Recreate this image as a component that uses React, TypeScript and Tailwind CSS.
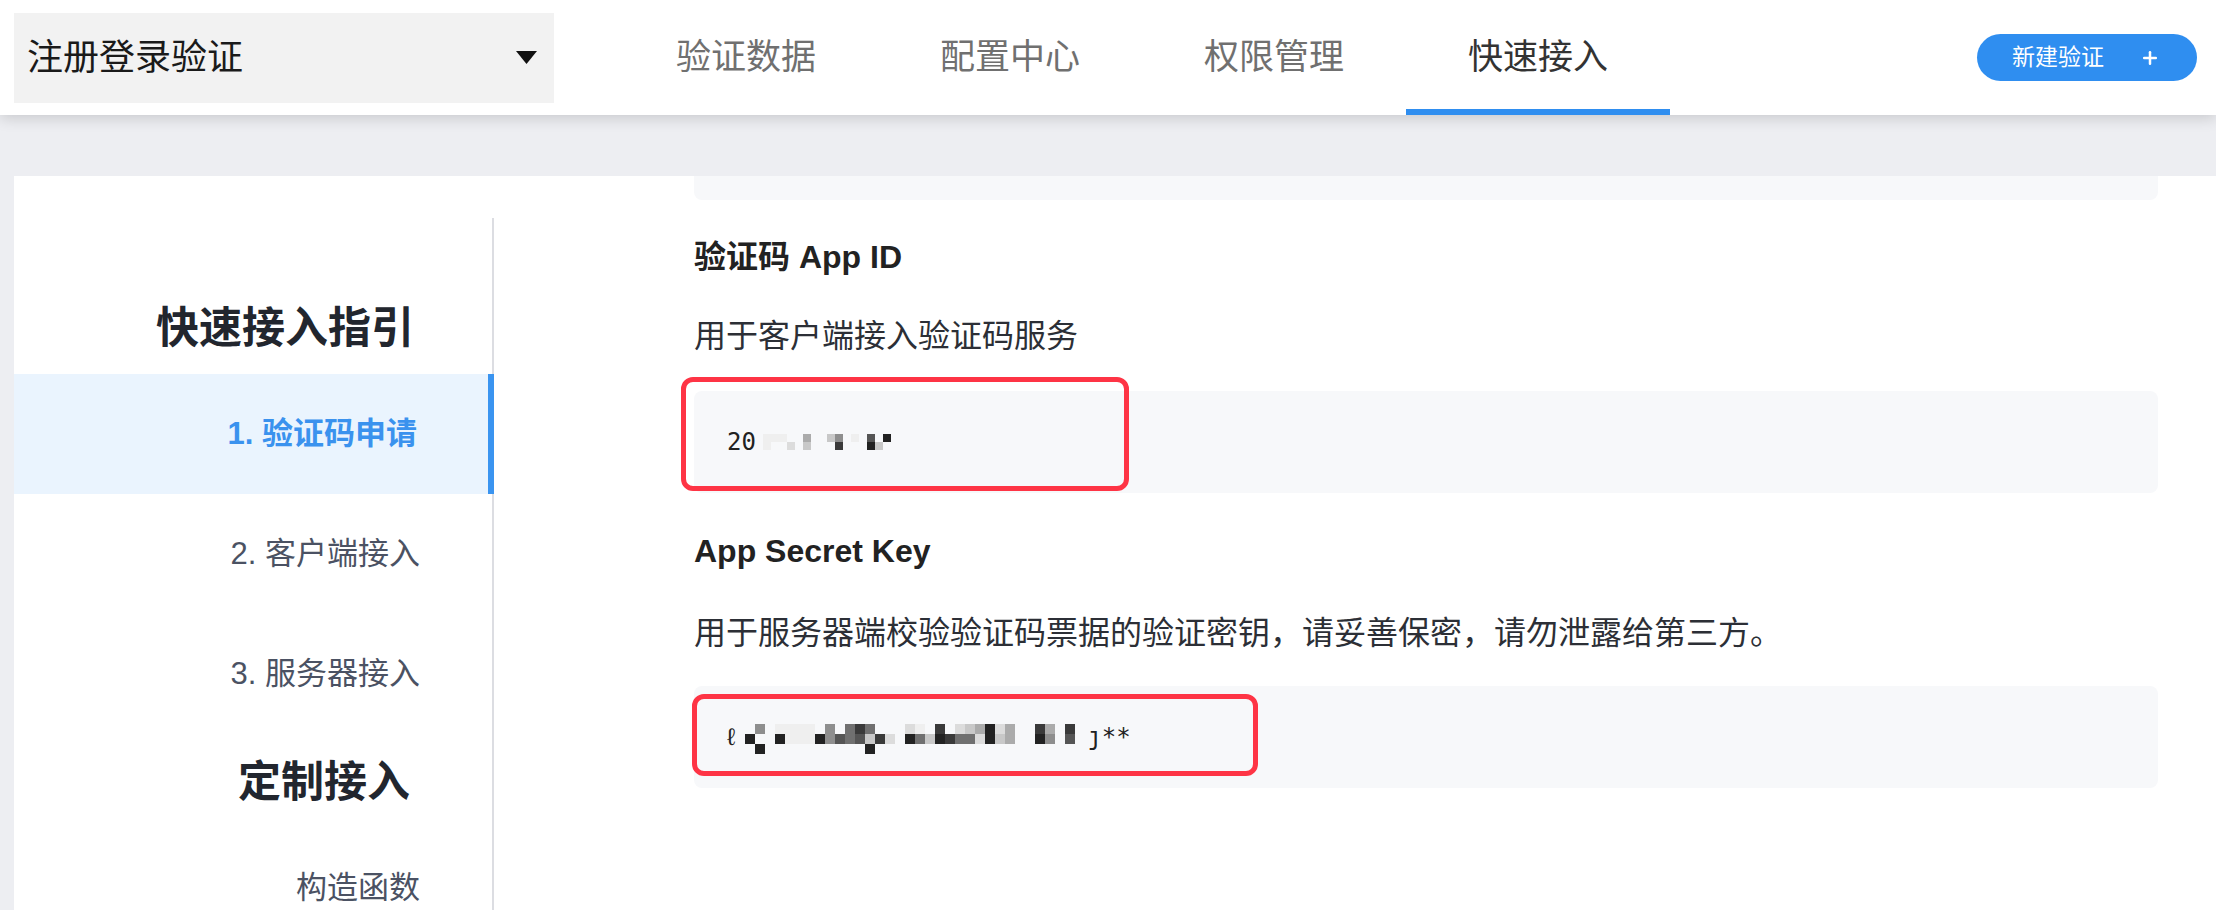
import { Plus } from "lucide-react";

const SHADE: Record<string, string> = {
  "0": "bg-transparent",
  "1": "bg-[#efefef]",
  "2": "bg-[#dcdcdc]",
  "3": "bg-[#c8c8c8]",
  "4": "bg-[#ababab]",
  "5": "bg-[#8e8e8e]",
  "6": "bg-[#707070]",
  "7": "bg-[#555555]",
  "8": "bg-[#3a3a3a]",
  "9": "bg-[#222222]",
};

// pixelated (masked) part of the keys
function Mosaic({ rows, cell }: { rows: string[]; cell: string }) {
  return (
    <div className="flex flex-col">
      {rows.map((row, i) => (
        <div key={i} className="flex">
          {row.split("").map((c, j) => (
            <span key={j} className={`${cell} ${SHADE[c] ?? "bg-transparent"}`} />
          ))}
        </div>
      ))}
    </div>
  );
}

const tabs = ["验证数据", "配置中心", "权限管理", "快速接入"];

const steps = [
  { label: "1. 验证码申请", active: true },
  { label: "2. 客户端接入", active: false },
  { label: "3. 服务器接入", active: false },
];

export default function App() {
  return (
    <div className="w-[2216px] h-[910px] overflow-hidden bg-[#edeef2] flex flex-col font-['Liberation_Sans','Noto_Sans_CJK_SC',sans-serif]">
      {/* Header */}
      <header className="relative z-10 h-[115px] shrink-0 bg-white flex items-center shadow-[0_3px_14px_rgba(0,0,0,0.16)]">
        <div className="ml-[14px] w-[540px] h-[90px] bg-[#f2f2f2] flex items-center justify-between pl-[13px] pr-[17px]">
          <span className="text-[36px] text-[#1a1a1a]">注册登录验证</span>
          <svg width="21" height="13" viewBox="0 0 21 13">
            <polygon points="0,0 21,0 10.5,13" fill="#111" />
          </svg>
        </div>

        <nav className="ml-[60px] flex h-full">
          {tabs.map((t, i) => (
            <div key={t} className="relative w-[264px] h-full flex items-center justify-center">
              <span className={i === 3 ? "text-[35px] text-[#333]" : "text-[35px] text-[#707070]"}>{t}</span>
              {i === 3 && <div className="absolute left-0 right-0 bottom-0 h-[6px] bg-[#2f8ef0]" />}
            </div>
          ))}
        </nav>

        <button className="ml-auto mr-[19px] w-[220px] h-[47px] rounded-full bg-[#2f8ef0] flex items-center pl-[35px] text-white">
          <span className="text-[23px]">新建验证</span>
          <Plus className="ml-[36px] w-[20px] h-[20px]" strokeWidth={3} />
        </button>
      </header>

      {/* Body */}
      <main className="flex-1 pt-[61px] pl-[14px] flex min-h-0">
        <div className="flex-1 bg-white flex min-h-0">
          {/* Sidebar */}
          <aside className="w-[480px] shrink-0 pt-[42px] flex flex-col">
            <div className="flex-1 border-r-2 border-[#dcdde2]">
              <div className="h-[156px] pt-[78px] pr-[78px] text-right text-[43px] leading-[64px] font-bold text-[#22262e]">
                快速接入指引
              </div>
              {steps.map((s) => (
                <div
                  key={s.label}
                  className={
                    s.active
                      ? "relative h-[120px] flex items-center justify-end pr-[75px] bg-[#eaf4fe]"
                      : "h-[120px] flex items-center justify-end pr-[72px]"
                  }
                >
                  <span
                    className={
                      s.active
                        ? "text-[31px] font-bold text-[#3a92ee]"
                        : "text-[31px] text-[#4b5263]"
                    }
                  >
                    {s.label}
                  </span>
                  {s.active && <div className="absolute top-0 bottom-0 right-[-2px] w-[6px] bg-[#3a94f0]" />}
                </div>
              ))}
              <div className="h-[94px] pt-[16px] pr-[82px] text-right text-[43px] leading-[64px] font-bold text-[#22262e]">
                定制接入
              </div>
              <div className="h-[120px] flex items-center justify-end pr-[72px]">
                <span className="text-[31px] text-[#4b5263]">构造函数</span>
              </div>
            </div>
          </aside>

          {/* Content */}
          <section className="flex-1 pl-[200px] pr-[58px] text-[#222]">
            <div className="h-[24px] bg-[#f7f8fa] rounded-b-[8px]" />

            <h3 className="mt-[35px] text-[32px] leading-[44px] font-bold text-[#222]">验证码 App ID</h3>
            <p className="mt-[35px] text-[32px] leading-[44px] text-[#2c2f36]">用于客户端接入验证码服务</p>

            <div className="relative mt-[33px] h-[102px] bg-[#f7f8fa] rounded-[8px] flex items-center pl-[33px]">
              <span className="font-['DejaVu_Sans_Mono','Liberation_Mono',monospace] text-[24px] text-[#222]">20</span>
              <div className="ml-[7px]">
                <Mosaic
                  cell="w-[8px] h-[8px]"
                  rows={["1110040035010709", "1002030008000930"]}
                />
              </div>
              <div className="absolute left-[-13px] top-[-14px] w-[448px] h-[114px] border-[5px] border-[#fe3445] rounded-[12px]" />
            </div>

            <h3 className="mt-[36px] text-[32px] leading-[44px] font-bold text-[#222]">App Secret Key</h3>
            <p className="mt-[38px] text-[32px] leading-[44px] text-[#2c2f36]">
              用于服务器端校验验证码票据的验证密钥，请妥善保密，请勿泄露给第三方。
            </p>

            <div className="relative mt-[31px] h-[102px] bg-[#f7f8fa] rounded-[8px] flex items-center pl-[30px]">
              <span className="font-['DejaVu_Sans_Mono','Liberation_Mono',monospace] text-[24px] text-[#222]">ℓ</span>
              <div className="ml-[7px] pt-[4px]">
                <Mosaic
                  cell="w-[10px] h-[10px]"
                  rows={[
                    "050111105068600021080234924008408",
                    "900911195767382096398662934009507",
                    "090000000000900000000000000000000",
                  ]}
                />
              </div>
              <span className="ml-[12px] font-['DejaVu_Sans_Mono','Liberation_Mono',monospace] text-[24px] text-[#222]">ȷ**</span>
              <div className="absolute left-[-2px] top-[8px] w-[566px] h-[82px] border-[5px] border-[#fe3445] rounded-[12px]" />
            </div>
          </section>
        </div>
      </main>
    </div>
  );
}
